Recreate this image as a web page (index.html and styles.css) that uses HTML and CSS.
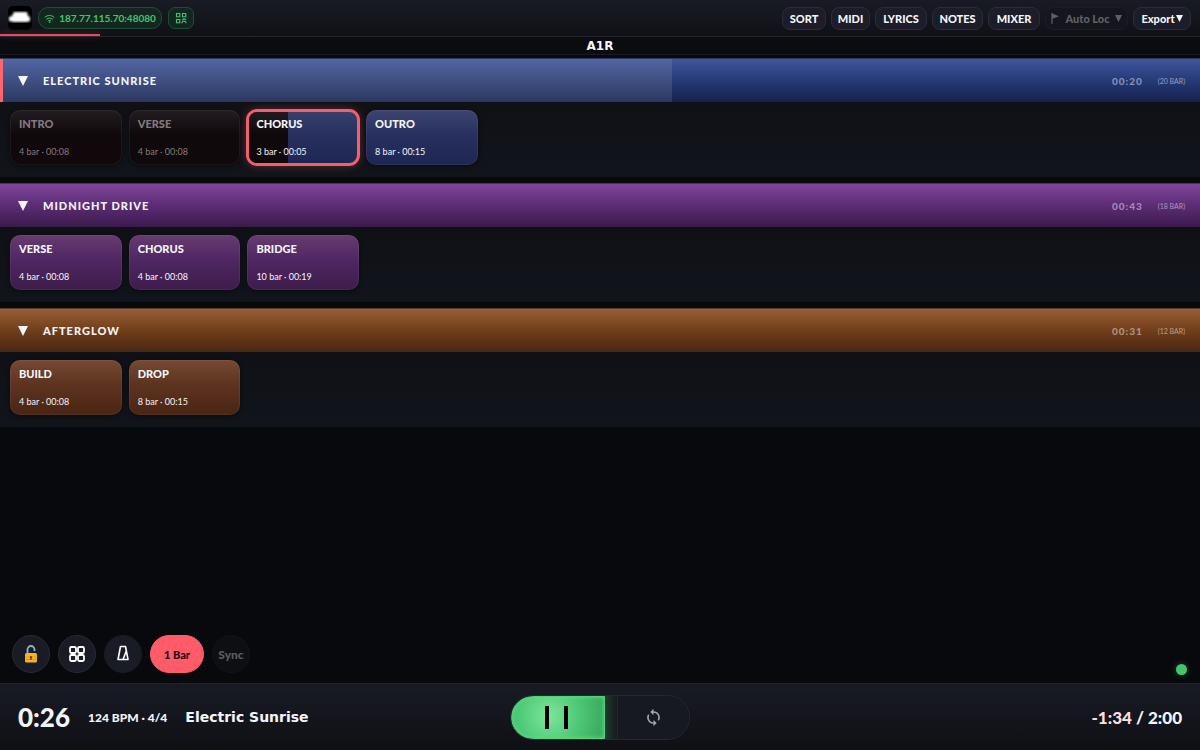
FILE: index.html
```html
<!DOCTYPE html>
<html lang="en">
<head>
<meta charset="UTF-8">
<meta name="viewport" content="width=device-width, initial-scale=1.0">
<title>A1R</title>
<link rel="stylesheet" href="styles.css">
</head>
<body>
  <header class="topbar">
    <svg class="logo" viewBox="0 0 24 24" aria-hidden="true">
      <defs><filter id="soft"><feGaussianBlur stdDeviation="0.8"/></filter></defs>
      <rect width="24" height="24" rx="5" fill="#000"/>
      <path d="M6 6h13l1 4 2 1v4l-3 1H6l-5-1v-4l3-1z" fill="#fff" filter="url(#soft)"/>
    </svg>
    <button class="address" type="button">
      <svg viewBox="0 0 12 10" width="11" height="9" fill="none" stroke="currentColor" stroke-width="1.1" stroke-linecap="round"><path d="M1 3.6c3-2.8 7-2.8 10 0M2.8 5.7c2-1.7 4.4-1.7 6.4 0M4.6 7.6c.9-.7 1.9-.7 2.8 0"/><circle cx="6" cy="9" r=".3"/></svg>
      187.77.115.70:48080
    </button>
    <button class="qr" type="button" aria-label="Show QR code">
      <svg viewBox="0 0 12 12" width="12" height="12" fill="none" stroke="currentColor" stroke-width="1.1"><path d="M1.5 1.5h3.3v3.3H1.5zM7.5 1.5h3.3v3.3H7.5zM1.5 7.5h3.3v3.3H1.5z"/><path d="M7 8l2-1.3L11 8M7 11.3V10l2-1 2 1v1.3"/></svg>
    </button>
    <nav class="menu">
      <button class="menu-btn sort" type="button">SORT</button>
      <button class="menu-btn midi" type="button">MIDI</button>
      <button class="menu-btn lyrics" type="button">LYRICS</button>
      <button class="menu-btn notes" type="button">NOTES</button>
      <button class="menu-btn mixer" type="button">MIXER</button>
      <button class="menu-btn autoloc" type="button" disabled>
        <svg viewBox="0 0 9 11" width="9" height="11"><path d="M1 0v11" stroke="currentColor" stroke-width="1.2"/><path d="M1 .5l7 2.7L1 6z" fill="currentColor"/></svg>
        <span>Auto Loc</span>
        <svg class="caret" viewBox="0 0 6 6"><path d="M0 0h6L3 6z"/></svg>
      </button>
      <button class="menu-btn export" type="button"><span>Export</span><svg class="caret" viewBox="0 0 6 6"><path d="M0 0h6L3 6z"/></svg></button>
    </nav>
    <div class="show-progress"></div>
  </header>
  <h1 class="set-name">A1R</h1>

  <main class="songs">
    <section class="song blue playing">
      <div class="song-head">
        <div class="song-progress" style="width: 56%"></div>
        <button class="fold" type="button" aria-label="Collapse"><svg viewBox="0 0 10 10"><path d="M0 0h10L5 10z"/></svg></button>
        <h2>ELECTRIC SUNRISE</h2>
        <span class="song-time">00:20</span>
        <span class="song-bars">(20 BAR)</span>
      </div>
      <div class="parts">
        <button class="part done" type="button"><b>INTRO</b><span>4 bar · 00:08</span></button>
        <button class="part done" type="button"><b>VERSE</b><span>4 bar · 00:08</span></button>
        <button class="part current" type="button"><i class="part-progress" style="width: 35%"></i><b>CHORUS</b><span>3 bar · 00:05</span></button>
        <button class="part" type="button"><b>OUTRO</b><span>8 bar · 00:15</span></button>
      </div>
    </section>

    <section class="song purple">
      <div class="song-head">
        <button class="fold" type="button" aria-label="Collapse"><svg viewBox="0 0 10 10"><path d="M0 0h10L5 10z"/></svg></button>
        <h2>MIDNIGHT DRIVE</h2>
        <span class="song-time">00:43</span>
        <span class="song-bars">(18 BAR)</span>
      </div>
      <div class="parts">
        <button class="part" type="button"><b>VERSE</b><span>4 bar · 00:08</span></button>
        <button class="part" type="button"><b>CHORUS</b><span>4 bar · 00:08</span></button>
        <button class="part" type="button"><b>BRIDGE</b><span>10 bar · 00:19</span></button>
      </div>
    </section>

    <section class="song orange">
      <div class="song-head">
        <button class="fold" type="button" aria-label="Collapse"><svg viewBox="0 0 10 10"><path d="M0 0h10L5 10z"/></svg></button>
        <h2>AFTERGLOW</h2>
        <span class="song-time">00:31</span>
        <span class="song-bars">(12 BAR)</span>
      </div>
      <div class="parts">
        <button class="part" type="button"><b>BUILD</b><span>4 bar · 00:08</span></button>
        <button class="part" type="button"><b>DROP</b><span>8 bar · 00:15</span></button>
      </div>
    </section>
  </main>

  <div class="tools">
    <button class="tool" type="button" aria-label="Lock">
      <svg viewBox="0 0 14 18" width="14" height="18">
        <path d="M3.5 8V4.5a3.5 3.5 0 0 1 7 0V6" fill="none" stroke="#8fb3c4" stroke-width="1.8"/>
        <rect x="1" y="8" width="12" height="9.5" rx="1.5" fill="#f5b323"/>
        <path d="M1.5 12h11M1.5 14.5h11" stroke="#dc9415" stroke-width=".7"/>
        <path d="M7 11a1.2 1.2 0 0 1 .6 2.2V15H6.4v-1.8A1.2 1.2 0 0 1 7 11z" fill="#5b3b12"/>
      </svg>
    </button>
    <button class="tool" type="button" aria-label="Grid">
      <svg viewBox="0 0 16 16" width="16" height="16" fill="none" stroke="#fff" stroke-width="1.8"><rect x="1" y="1" width="6" height="6" rx="1.4"/><rect x="9" y="1" width="6" height="6" rx="1.4"/><rect x="1" y="9" width="6" height="6" rx="1.4"/><rect x="9" y="9" width="6" height="6" rx="1.4"/></svg>
    </button>
    <button class="tool flat" type="button" aria-label="Metronome">
      <svg viewBox="0 0 14 18" width="14" height="18" fill="none" stroke="#fff" stroke-width="1.6" stroke-linejoin="round"><path d="M4.500 1.500h5l2.500 13H2zM7 14.500l3.500-9"/></svg>
    </button>
    <button class="tool quantize" type="button">1 Bar</button>
    <button class="tool sync" type="button" disabled>Sync</button>
    <span class="status-dot"></span>
  </div>

  <footer class="player">
    <div class="now">
      <span class="clock">0:26</span>
      <span class="tempo">124 BPM · 4/4</span>
      <span class="now-title">Electric Sunrise</span>
    </div>
    <div class="transport">
      <button class="pause" type="button" aria-label="Pause"><svg viewBox="0 0 24 24" width="24" height="24"><path d="M0 1h4v23H0zM19 1h4v23h-4z"/></svg></button>
      <button class="loop" type="button" aria-label="Loop"><svg viewBox="0 0 24 24" width="19" height="19"><path d="M12 4V1L8 5l4 4V6a6 6 0 0 1 5.300 8.800l1.460 1.460A8 8 0 0 0 12 4zm0 14a6 6 0 0 1-5.300-8.800L5.240 7.740A8 8 0 0 0 12 20v3l4-4-4-4z"/></svg></button>
    </div>
    <div class="remain"><span>-1:34</span> / 2:00</div>
  </footer>
</body>
</html>
```

FILE: styles.css
```css
* {
  box-sizing: border-box;
}

body {
  margin: 0;
  min-height: 100vh;
  display: flex;
  flex-direction: column;
  background: #08090c;
  color: #f4f5fb;
  font-family: Lato, "Liberation Sans", sans-serif;
}

button {
  font-family: inherit;
  color: inherit;
  padding: 0;
  border: 1px solid transparent;
}

svg {
  flex: none;
}

/* Top bar */
.topbar {
  position: relative;
  display: flex;
  align-items: center;
  gap: 6px;
  height: 37px;
  padding: 0 9px 0 8px;
  background: linear-gradient(#191b24, #101117);
  border-bottom: 1px solid #23252b;
}

.logo {
  width: 24px;
  height: 24px;
}

.address,
.qr {
  display: flex;
  align-items: center;
  justify-content: center;
  height: 22px;
  background: #12281f;
  border-color: #1f4d33;
  color: #45c46f;
}

.address {
  gap: 4px;
  width: 124px;
  border-radius: 10px;
  font-size: 10px;
  font-weight: 700;
  white-space: nowrap;
}

.qr {
  width: 26px;
  border-radius: 7px;
}

.menu {
  display: flex;
  gap: 5px;
  margin-left: auto;
}

.menu-btn {
  display: flex;
  align-items: center;
  justify-content: center;
  height: 23px;
  background: #1c1d28;
  border-color: #2a2c37;
  border-radius: 8px;
  font-size: 11px;
  font-weight: 900;
}

.sort { width: 44px; }
.midi { width: 39px; }
.lyrics,
.mixer { width: 52px; }
.notes { width: 51px; }

.autoloc {
  width: 83px;
  gap: 5px;
  background: #15161d;
  border-color: #1c1d25;
  color: #5e6068;
}

.export {
  width: 58px;
  gap: 1px;
}

.caret {
  width: 7px;
  height: 7px;
  fill: currentColor;
}

.show-progress {
  position: absolute;
  left: 0;
  bottom: 0;
  width: 100px;
  height: 2px;
  background: #d9525f;
  box-shadow: 0 0 6px rgba(255, 91, 106, 0.4);
}

.set-name {
  margin: 0;
  height: 18px;
  background: #0b0c10;
  border-bottom: 1px solid #181c20;
  font-family: "DejaVu Sans", sans-serif;
  font-size: 12px;
  line-height: 18px;
  text-align: center;
}

/* Songs */
.songs {
  flex: 1;
  display: flex;
  flex-direction: column;
  gap: 6px;
  padding-top: 3px;
}

.song-head {
  position: relative;
  display: flex;
  align-items: center;
  height: 44px;
  padding: 0 15px 0 18px;
  border-top: 1px solid rgba(255, 255, 255, 0.1);
}

.song-head > * {
  position: relative;
}

.blue .song-head { background: linear-gradient(#40559c, #263a78 50%, #16214d); }
.purple .song-head { background: linear-gradient(#7f469b, #5c2c75 50%, #3b1b4c); }
.orange .song-head { background: linear-gradient(#995f36, #703e1a 50%, #4a2711); }

.playing .song-head::before {
  content: "";
  position: absolute;
  left: 0;
  top: 0;
  bottom: 0;
  z-index: 1;
  width: 3px;
  background: #ff6472;
}

.song-head .song-progress {
  position: absolute;
  left: 0;
  top: 0;
  bottom: 0;
  background: linear-gradient(#5266a3, #2c3860);
}

.fold {
  display: flex;
  width: 10px;
  background: none;
  border: 0;
}

.fold svg {
  width: 10px;
  height: 10px;
  fill: #f4f5fb;
}

.song-head h2 {
  margin: 0 auto 0 15px;
  font-size: 11px;
  font-weight: 900;
  letter-spacing: 1px;
}

.song-time {
  margin-right: 15px;
  color: rgba(255, 255, 255, 0.45);
  font-size: 10px;
  font-weight: 900;
  letter-spacing: 1px;
}

.song-bars {
  color: rgba(255, 255, 255, 0.5);
  font-size: 7px;
}

.parts {
  display: grid;
  grid-template-columns: repeat(10, 1fr);
  gap: 7px;
  padding: 8px 10px 12px;
  background: linear-gradient(#101116, #11141b);
}

.part {
  position: relative;
  display: flex;
  flex-direction: column;
  justify-content: space-between;
  align-items: flex-start;
  height: 55px;
  padding: 6px 8px;
  border-color: rgba(255, 255, 255, 0.06);
  border-radius: 10px;
  background-clip: border-box;
  background-origin: border-box;
  box-shadow: 0 1px 4px rgba(0, 0, 0, 0.5);
  white-space: nowrap;
}

.blue .part { background-image: linear-gradient(#3e4470, #27305f 45%, #1e2752); }
.purple .part { background-image: linear-gradient(#673b70, #4f2763 45%, #3d1c4a); }
.orange .part { background-image: linear-gradient(#754a33, #5d3320 45%, #492513); }

.part b {
  position: relative;
  font-size: 11px;
  font-weight: 900;
  line-height: 14px;
}

.part span {
  position: relative;
  font-size: 9px;
  line-height: 12px;
}

.blue .done {
  background-image: linear-gradient(#231c20, #10090c 45%, #10080a);
  color: #85797e;
}

.blue .current {
  background-image: linear-gradient(#38406b, #27305f 45%, #1e2752);
  outline: 3px solid #f25f6d;
  outline-offset: -2px;
  box-shadow: 0 0 10px rgba(255, 91, 106, 0.4);
}

.part-progress {
  position: absolute;
  left: 1px;
  top: 1px;
  bottom: 1px;
  border-radius: 8px 0 0 8px;
  background: linear-gradient(#211a1e, #10090c 45%, #10080a);
}

/* Floating tools */
.tools {
  display: flex;
  gap: 8px;
  padding: 0 13px 10px 12px;
}

.tool {
  display: flex;
  align-items: center;
  justify-content: center;
  width: 38px;
  height: 38px;
  background: #1a1c25;
  border-color: #292b34;
  border-radius: 20px;
  font-size: 12px;
  font-weight: 900;
}

.flat {
  border-color: #1a1c25;
}

.quantize {
  width: 54px;
  background: #ff5b69;
  border-color: #ff5b69;
  color: #1c0d11;
  font-size: 11px;
}

.sync {
  background: #0e0f13;
  border-color: #131419;
  color: #5c5d61;
}

.status-dot {
  align-self: flex-end;
  width: 11px;
  height: 11px;
  margin-left: auto;
  margin-bottom: -2px;
  border-radius: 50%;
  background: #45c46b;
  box-shadow: 0 0 6px rgba(69, 196, 107, 0.4);
}

/* Player */
.player {
  display: grid;
  grid-template-columns: 1fr auto 1fr;
  align-items: center;
  height: 67px;
  padding: 0 18px;
  background: linear-gradient(#191b24, #0f1015);
  border-top: 1px solid #22242b;
}

.now {
  display: flex;
  align-items: center;
  gap: 18px;
}

.clock {
  font-size: 26px;
  font-weight: 900;
}

.tempo {
  font-size: 12px;
  font-weight: 900;
}

.now-title {
  font-family: "DejaVu Sans", sans-serif;
  font-size: 14px;
  font-weight: 700;
}

.transport {
  display: flex;
  justify-content: space-between;
  width: 180px;
  height: 45px;
  background: linear-gradient(90deg, #15161e 52%, #1f4031 52%, #15181d 60%);
  border: 1px solid #262830;
  border-radius: 23px;
  overflow: hidden;
}

.pause {
  display: flex;
  align-items: center;
  justify-content: center;
  width: 94px;
  padding-right: 3px;
  background: radial-gradient(circle at 40% 45%, #7de69b, #4fc977 50%, #36a559);
  border: 1px solid #50d27b;
  border-radius: 22px 0 0 22px;
  box-shadow: inset 0 0 4px #62e08b;
}

.loop {
  display: flex;
  align-items: center;
  justify-content: center;
  width: 72px;
  background: #171922;
  border: 0;
  border-left: 1px solid #262830;
}

.loop svg {
  fill: #a5a6aa;
}

.remain {
  text-align: right;
  font-size: 17px;
  font-weight: 900;
}

.remain span {
  color: #ffdce0;
}
```
